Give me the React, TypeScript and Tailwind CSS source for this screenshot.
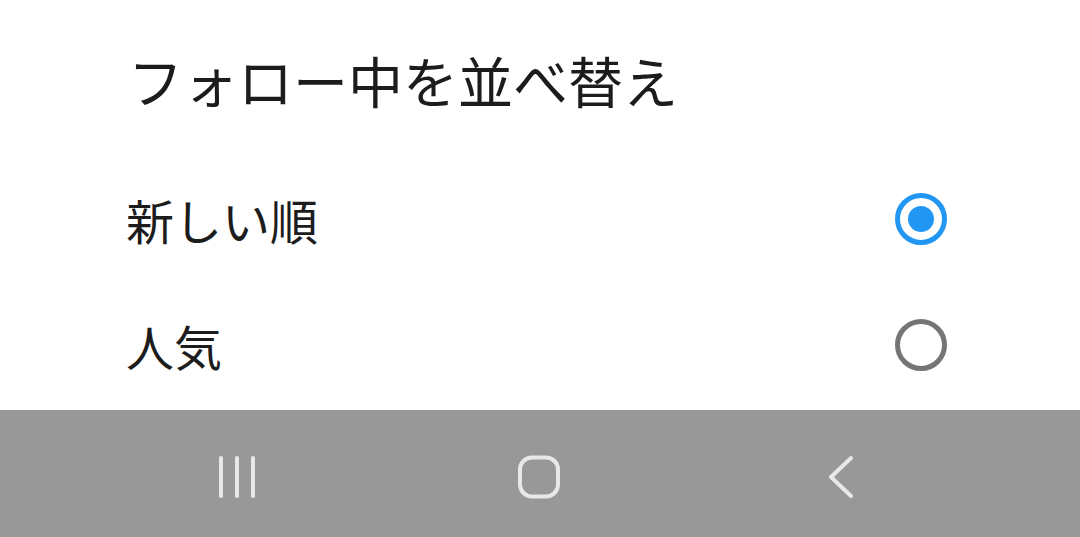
import { useState } from "react";

const OPTIONS = ["新しい順", "人気"];

function Radio({ checked }: { checked: boolean }) {
  return checked ? (
    <div className="w-[52px] h-[52px] rounded-full border-[5px] border-[#2196f3] flex items-center justify-center">
      <div className="w-[26px] h-[26px] rounded-full bg-[#2196f3]" />
    </div>
  ) : (
    <div className="w-[52px] h-[52px] rounded-full border-[5px] border-[#757575]" />
  );
}

export default function App() {
  const [sel, setSel] = useState(0);

  return (
    <div
      className="w-[1080px] h-[537px] flex flex-col bg-white text-[#1c1c1c] overflow-hidden"
      style={{ fontFamily: '"Noto Sans CJK JP", "Noto Sans", sans-serif' }}
    >
      {/* sheet */}
      <div className="h-[410px] flex flex-col">
        <div className="h-[156px] pt-[52px] pl-[128px]">
          <h1 className="text-[55px] leading-none font-normal">フォロー中を並べ替え</h1>
        </div>
        {OPTIONS.map((o, i) => (
          <button
            key={o}
            onClick={() => setSel(i)}
            className="h-[126px] flex items-center justify-between pl-[126px] pr-[133px] text-left"
          >
            <span className="text-[48px] leading-none">{o}</span>
            <Radio checked={sel === i} />
          </button>
        ))}
      </div>

      {/* system nav bar */}
      <div className="h-[127px] bg-[#989898] flex items-center pl-[86px] pt-[7px]">
        <div className="w-[302px] flex justify-center">
          <svg width="44" height="44" viewBox="0 0 44 44" fill="none" stroke="#e8e8e8" strokeWidth="4" strokeLinecap="round">
            <path d="M6 3v38M22 3v38M38 3v38" />
          </svg>
        </div>
        <div className="w-[302px] flex justify-center">
          <svg width="44" height="44" viewBox="0 0 44 44" fill="none" stroke="#e8e8e8" strokeWidth="4">
            <rect x="3" y="2.5" width="38" height="39" rx="12" />
          </svg>
        </div>
        <div className="w-[302px] flex justify-center">
          <svg width="30" height="44" viewBox="0 0 30 44" fill="none" stroke="#e8e8e8" strokeWidth="4" strokeLinecap="round" strokeLinejoin="round">
            <path d="M25 3L5 22l20 19" />
          </svg>
        </div>
      </div>
    </div>
  );
}
